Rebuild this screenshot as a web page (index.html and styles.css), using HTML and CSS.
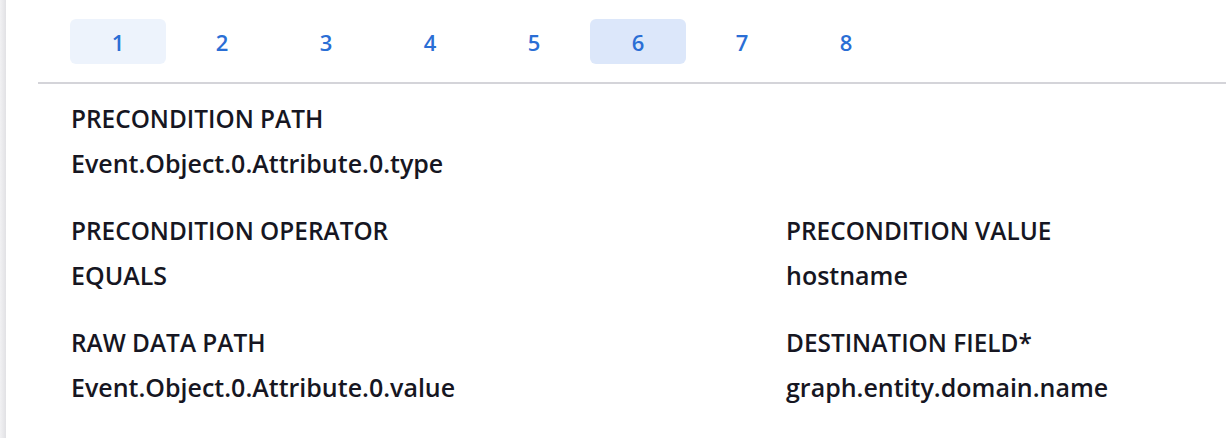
FILE: index.html
```html
<html>
  <head>
    <title>mapping</title>
    <link rel="stylesheet" href="styles.css">
  </head>
  <body>
    <div class="shell">
      <div class="edge"></div>
      <main>
        <nav class="steps">
          <a class="step visited">1</a>
          <a class="step">2</a>
          <a class="step">3</a>
          <a class="step">4</a>
          <a class="step">5</a>
          <a class="step active">6</a>
          <a class="step">7</a>
          <a class="step">8</a>
        </nav>
        <section class="fields">
          <div class="field wide">
            <div class="label">PRECONDITION PATH</div>
            <div class="value">Event.Object.0.Attribute.0.type</div>
          </div>
          <div class="field">
            <div class="label">PRECONDITION OPERATOR</div>
            <div class="value">EQUALS</div>
          </div>
          <div class="field">
            <div class="label">PRECONDITION VALUE</div>
            <div class="value">hostname</div>
          </div>
          <div class="field">
            <div class="label">RAW DATA PATH</div>
            <div class="value">Event.Object.0.Attribute.0.value</div>
          </div>
          <div class="field">
            <div class="label">DESTINATION FIELD*</div>
            <div class="value">graph.entity.domain.name</div>
          </div>
        </section>
      </main>
    </div>
  </body>
</html>
```

FILE: styles.css
```css
:root {
  --ink: hsl(240, 22%, 11%);
  --blue: hsl(216, 67%, 50%);
  --rule: hsl(240, 6%, 84%);
  --tab-soft: hsl(218, 75%, 96%);
  --tab-on: hsl(218, 74%, 92%);
}

body {
  margin: 0;
  background-color: #fff;
  color: var(--ink);
  font-family: "Open Sans", "Liberation Sans", sans-serif;
}

div.shell {
  display: flex;
  min-height: 100vh;
}
div.edge {
  width: 6px;
  flex-shrink: 0;
  background: linear-gradient(to right, hsl(240, 8%, 95%), hsl(240, 6%, 89%));
}

main {
  flex-grow: 1;
  padding-left: 32px;
}

nav.steps {
  display: flex;
  gap: 8px;
  padding: 19px 0 18px 32px;
  border-bottom: 2px solid var(--rule);
}
a.step {
  width: 96px;
  height: 45px;
  border-radius: 6px;
  display: flex;
  align-items: center;
  justify-content: center;
  color: var(--blue);
  font-size: 22px;
  font-weight: 600;
  cursor: pointer;
}
a.step.visited {
  background-color: var(--tab-soft);
}
a.step.active {
  background-color: var(--tab-on);
}

section.fields {
  display: grid;
  grid-template-columns: 715px 1fr;
  row-gap: 38px;
  padding: 20px 0 0 33px;
}
div.field.wide {
  grid-column: 1 / 3;
}
div.field {
  display: flex;
  flex-direction: column;
  gap: 14px;
  font-weight: 600;
  line-height: 30px;
}
div.label {
  font-size: 24.4px;
}
div.value {
  font-size: 25px;
}
```
